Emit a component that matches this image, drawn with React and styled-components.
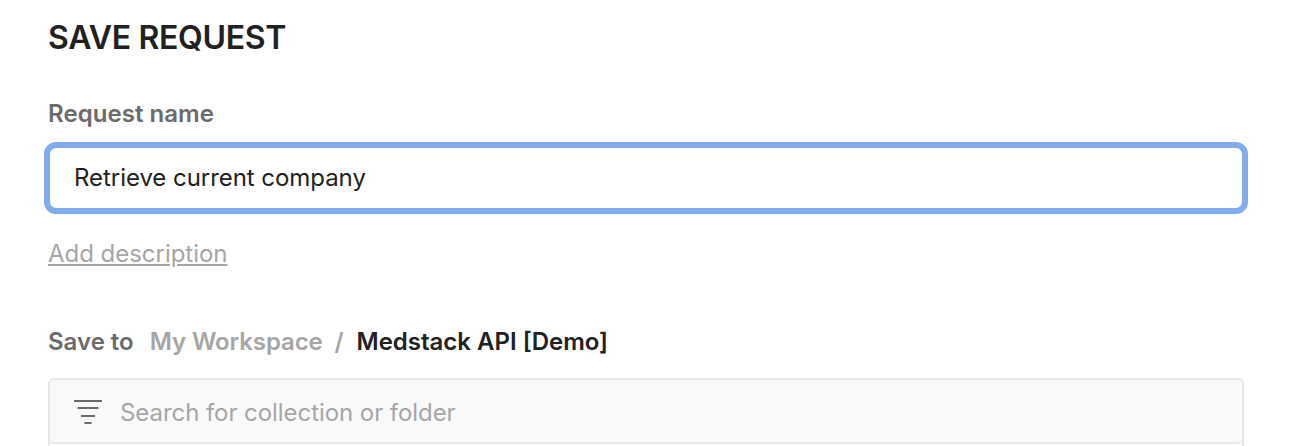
import React from "react";
import styled, { createGlobalStyle } from "styled-components";

const Global = createGlobalStyle`
  * { box-sizing: border-box; }
  body { margin: 0; background: #fff; font-family: Inter, sans-serif; overflow: hidden; }
`;
const Dialog = styled.main`
  height: 446px; padding: 18px 46px 0 48px; overflow: hidden;
  display: flex; flex-direction: column;
`;
const Title = styled.h1`
  margin: 0; font-size: 32px; line-height: 40px; font-weight: 600; letter-spacing: -0.33px; color: #212121;
`;
const Label = styled.label`
  margin-top: 40px; font-size: 24px; line-height: 32px; font-weight: 600; letter-spacing: 0.05px; color: #6b6b6b;
`;
const NameField = styled.div`
  margin: 12px -4px 0; height: 72px; border: 6px solid #81abef; border-radius: 12px;
  padding: 0 24px; font-size: 24px; line-height: 60px; letter-spacing: -0.05px; color: #212121;
`;
const DescriptionLink = styled.a`
  margin-top: 24px; font-size: 24px; line-height: 32px; letter-spacing: -0.03px; color: #a6a6a6; text-decoration: underline;
`;
const Path = styled.div`
  margin-top: 56px; display: flex; font-size: 24px; line-height: 32px; font-weight: 600; white-space: pre;
`;
const Crumb = styled.span`
  color: ${(p) => p.$color}; margin-right: ${(p) => p.$gap || 0}px; letter-spacing: ${(p) => p.$tracking || 0}px;
`;
const Picker = styled.section`
  margin-top: 20px; height: 90px; flex: none; border: 2px solid #e6e6e6; border-radius: 6px;
`;
const Search = styled.div`
  height: 64px; display: flex; align-items: center; gap: 18px; padding: 4px 24px 0;
  background: #f9f9f9; border-bottom: 2px solid #e6e6e6; border-radius: 4px; color: #a6a6a6;
  font-size: 24px; line-height: 32px; letter-spacing: -0.06px;
`;

export default function App() {
  return (
    <Dialog>
      <Global />
      <Title>SAVE REQUEST</Title>
      <Label>Request name</Label>
      <NameField>Retrieve current company</NameField>
      <DescriptionLink>Add description</DescriptionLink>
      <Path>
        <Crumb $color="#6b6b6b" $gap={16}>Save to</Crumb>
        <Crumb $color="#a6a6a6" $gap={12} $tracking={-0.12}>My Workspace</Crumb>
        <Crumb $color="#a6a6a6" $gap={12.8}>/</Crumb>
        <Crumb $color="#212121">Medstack API [Demo]</Crumb>
      </Path>
      <Picker>
        <Search>
          <svg width="28" height="26" viewBox="0 0 28 26" fill="none" stroke="#6b6b6b" strokeWidth="2">
            <path d="M0 1H28M3.5 8H24.5M7 16H21M10.5 23H17.5" />
          </svg>
          <span>Search for collection or folder</span>
        </Search>
      </Picker>
    </Dialog>
  );
}
